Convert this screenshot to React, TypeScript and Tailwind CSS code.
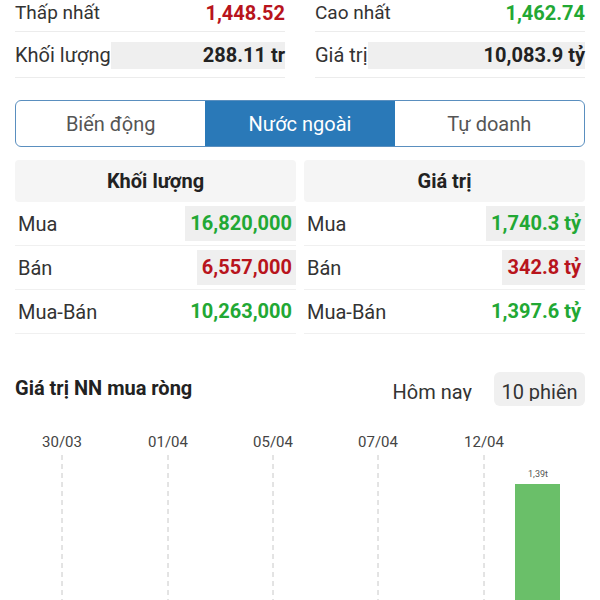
import React from "react";

const RED = "text-[#b8141c]";
const GREEN = "text-[#22a834]";

const tableRows = [
  { label: "Mua", vol: "16,820,000", volColor: GREEN, val: "1,740.3 tỷ", valColor: GREEN, boxed: true },
  { label: "Bán", vol: "6,557,000", volColor: RED, val: "342.8 tỷ", valColor: RED, boxed: true },
  { label: "Mua-Bán", vol: "10,263,000", volColor: GREEN, val: "1,397.6 tỷ", valColor: GREEN, boxed: false },
];

const dates = [
  { x: 62, label: "30/03" },
  { x: 168, label: "01/04" },
  { x: 273, label: "05/04" },
  { x: 378, label: "07/04" },
  { x: 484, label: "12/04" },
];

const StatColumn = ({
  lowLabel,
  lowValue,
  lowColor,
  sumLabel,
  sumValue,
}: {
  lowLabel: string;
  lowValue: string;
  lowColor: string;
  sumLabel: string;
  sumValue: string;
}) => (
  <div className="flex flex-col">
    <div className="h-[32px] pb-[5px] border-b border-[#ececec] flex items-center justify-between">
      <span className="text-[#333] text-[19px]">{lowLabel}</span>
      <span className={`font-bold ${lowColor}`}>{lowValue}</span>
    </div>
    <div className="h-[46px] pt-[10px] border-b border-[#ececec] flex items-start">
      <span className="h-[27px] leading-[27px] text-[#333]">{sumLabel}</span>
      <span className="flex-1 h-[27px] leading-[27px] bg-[#efefef] text-right font-bold text-[#222]">
        {sumValue}
      </span>
    </div>
  </div>
);

const DataTable = ({ title, field }: { title: string; field: "vol" | "val" }) => (
  <div className="flex flex-col">
    <div className="h-[42px] bg-[#f5f5f5] rounded-sm flex items-center justify-center font-bold text-[#222]">
      {title}
    </div>
    {tableRows.map((r) => {
      const value = field === "vol" ? r.vol : r.val;
      const color = field === "vol" ? r.volColor : r.valColor;
      return (
        <div key={r.label} className="h-[44px] border-b border-[#f0f0f0] flex items-center justify-between pl-[3px]">
          <span className="text-[#333]">{r.label}</span>
          <span className={`h-[35px] leading-[35px] pl-[5px] pr-[4px] font-bold ${color} ${r.boxed ? "bg-[#efefef]" : ""}`}>
            {value}
          </span>
        </div>
      );
    })}
  </div>
);

export default function App() {
  return (
    <div className="w-[600px] h-[600px] overflow-hidden bg-white text-[20px] font-['Roboto',sans-serif]">
      <div className="px-[15px] grid grid-cols-2 gap-[30px]">
        <StatColumn lowLabel="Thấp nhất" lowValue="1,448.52" lowColor={RED} sumLabel="Khối lượng" sumValue="288.11 tr" />
        <StatColumn lowLabel="Cao nhất" lowValue="1,462.74" lowColor={GREEN} sumLabel="Giá trị" sumValue="10,083.9 tỷ" />
      </div>

      <div className="mx-[15px] mt-[22px] h-[47px] grid grid-cols-3 border-[1.5px] border-[#5a8fbf] rounded-[6px] overflow-hidden">
        <div className="flex items-center justify-center text-[#555]">Biến động</div>
        <div className="flex items-center justify-center bg-[#2a79b8] text-white">Nước ngoài</div>
        <div className="flex items-center justify-center text-[#555]">Tự doanh</div>
      </div>

      <div className="px-[15px] mt-[13px] grid grid-cols-2 gap-[8px]">
        <DataTable title="Khối lượng" field="vol" />
        <DataTable title="Giá trị" field="val" />
      </div>

      <div className="px-[15px] mt-[38px] h-[34px] flex items-center">
        <span className="font-bold text-[#222] flex-1 -mt-[2px]">Giá trị NN mua ròng</span>
        <span className="h-[34px] flex items-start text-[#333]">
          <span className="h-[29px] overflow-hidden leading-[40px] mr-[22px]">Hôm nay</span>
          <span className="h-[34px] w-[91px] bg-[#f0f0f0] rounded-[6px] flex justify-center">
            <span className="h-[29px] overflow-hidden leading-[40px]">10 phiên</span>
          </span>
        </span>
      </div>

      <svg className="mt-[14px] block" width="600" height="180" viewBox="0 0 600 180">
        {dates.map((d) => (
          <g key={d.label}>
            <text x={d.x} y={27} textAnchor="middle" fontSize="15" fill="#444" fontFamily="Roboto, sans-serif">
              {d.label}
            </text>
            <line x1={d.x} y1={35} x2={d.x} y2={180} stroke="#c8c8c8" strokeWidth="1" strokeDasharray="5 4" />
          </g>
        ))}
        <rect x={515} y={64} width={45} height={116} fill="#6abf69" />
        <text x={538} y={57} textAnchor="middle" fontSize="9" fill="#555" fontFamily="Roboto, sans-serif">
          1,39t
        </text>
      </svg>
    </div>
  );
}
